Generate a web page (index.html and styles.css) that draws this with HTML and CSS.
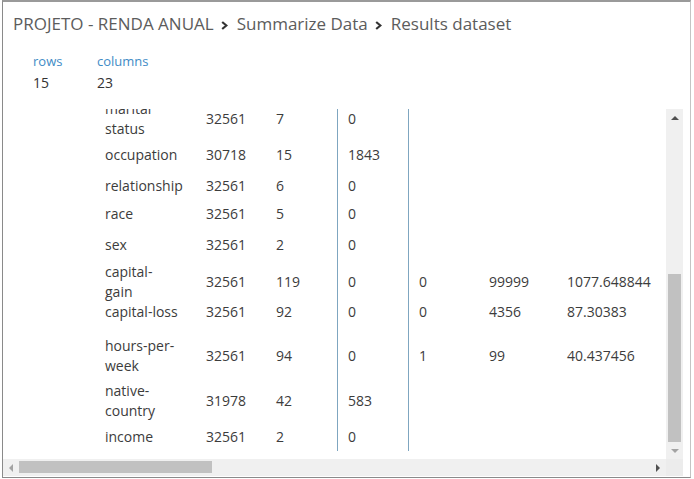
FILE: index.html
```
<!DOCTYPE html>
<html>
<head>
<meta charset="utf-8">
<link rel="stylesheet" href="styles.css">
</head>
<body>
<div class="panel">
  <div class="title">
    <span>PROJETO - RENDA ANUAL</span><svg class="chev" width="7" height="9" viewBox="0 0 7 9"><path d="M1.2 1 L5.4 4.5 L1.2 8" fill="none" stroke="#333" stroke-width="2.2"/></svg><span>Summarize Data</span><svg class="chev" width="7" height="9" viewBox="0 0 7 9"><path d="M1.2 1 L5.4 4.5 L1.2 8" fill="none" stroke="#333" stroke-width="2.2"/></svg><span>Results dataset</span>
  </div>
  <div class="stats">
    <div class="stat"><div class="label">rows</div><div class="value">15</div></div>
    <div class="stat"><div class="label">columns</div><div class="value">23</div></div>
  </div>
  <div class="viewport">
    <div class="content">
      <div class="table">
        <div class="row h37"><div class="c"></div><div class="c">marital<br>status</div><div class="c">32561</div><div class="c">7</div><div class="c sep">0</div><div class="c sep"></div><div class="c"></div><div class="c"></div></div>
        <div class="row h35"><div class="c"></div><div class="c">occupation</div><div class="c">30718</div><div class="c">15</div><div class="c sep">1843</div><div class="c sep"></div><div class="c"></div><div class="c"></div></div>
        <div class="row h27"><div class="c"></div><div class="c">relationship</div><div class="c">32561</div><div class="c">6</div><div class="c sep">0</div><div class="c sep"></div><div class="c"></div><div class="c"></div></div>
        <div class="row h30"><div class="c"></div><div class="c">race</div><div class="c">32561</div><div class="c">5</div><div class="c sep">0</div><div class="c sep"></div><div class="c"></div><div class="c"></div></div>
        <div class="row h32"><div class="c"></div><div class="c">sex</div><div class="c">32561</div><div class="c">2</div><div class="c sep">0</div><div class="c sep"></div><div class="c"></div><div class="c"></div></div>
        <div class="row h42"><div class="c"></div><div class="c">capital-<br>gain</div><div class="c">32561</div><div class="c">119</div><div class="c sep">0</div><div class="c sep">0</div><div class="c">99999</div><div class="c">1077.648844</div></div>
        <div class="row h18"><div class="c"></div><div class="c">capital-loss</div><div class="c">32561</div><div class="c">92</div><div class="c sep">0</div><div class="c sep">0</div><div class="c">4356</div><div class="c">87.30383</div></div>
        <div class="row h70"><div class="c"></div><div class="c">hours-per-<br>week</div><div class="c">32561</div><div class="c">94</div><div class="c sep">0</div><div class="c sep">1</div><div class="c">99</div><div class="c">40.437456</div></div>
        <div class="row h20"><div class="c"></div><div class="c">native-<br>country</div><div class="c">31978</div><div class="c">42</div><div class="c sep">583</div><div class="c sep"></div><div class="c"></div><div class="c"></div></div>
        <div class="row h40 last"><div class="c"></div><div class="c">income</div><div class="c">32561</div><div class="c">2</div><div class="c sep">0</div><div class="c sep"></div><div class="c"></div><div class="c"></div></div>
      </div>
    </div>
    <div class="vscroll">
      <div class="arrow up"></div>
      <div class="vtrack"><div class="vthumb"></div></div>
      <div class="arrow down"></div>
    </div>
    <div class="hscroll">
      <div class="harrow left"></div>
      <div class="htrack"><div class="hthumb"></div></div>
      <div class="harrow right"></div>
    </div>
    <div class="corner"></div>
  </div>
</div>
</body>
</html>
```
FILE: styles.css
```
* { box-sizing: border-box; }
html, body { margin: 0; padding: 0; background: #fff; }
body { font-family: "Open Sans", "Noto Sans", sans-serif; }

.panel {
  margin-left: 2px;
  width: 689px;
  height: 478px;
  border-left: 1px solid #8a8a8a;
  border-top: 2px solid #9a9a9a;
  border-right: 1px solid #c4c4c4;
  border-bottom: 1px solid #8a8a8a;
  background: #fff;
}

.title {
  padding: 10px 0 0 10px;
  font-size: 17px;
  line-height: 24px;
  color: #5c5c5c;
  white-space: nowrap;
}
.chev { margin: 0 9px 0 7px; vertical-align: 0; }

.stats {
  display: flex;
  margin-top: 16px;
  padding-left: 30px;
}
.stat { width: 64px; }
.label { font-size: 13px; line-height: 18px; color: #3f8cc6; }
.value { margin-top: 3px; font-size: 14px; line-height: 20px; color: #333; }

.viewport {
  margin-top: 16px;
  width: 680px;
  display: grid;
  grid-template-columns: 663px 17px;
  grid-template-rows: 350px 17px;
}
.content { overflow: hidden; }
.table { margin-top: -9px; }
.row {
  display: grid;
  grid-template-columns: 91px 101px 70px 72px 71px 70px 78px 130px;
  grid-template-rows: minmax(0, 1fr);
  font-size: 14px;
  line-height: 20px;
  color: #3c3c3c;
}
.c {
  display: flex;
  align-items: center;
  min-height: 0;
  padding-left: 11px;
  white-space: nowrap;
}
.c.sep { border-left: 1px solid #7fa6c0; padding-left: 10px; }
.row.last .c { padding-top: 12px; }
.h18 { height: 18px; }
.h20 { height: 20px; }
.h27 { height: 27px; }
.h30 { height: 30px; }
.h32 { height: 32px; }
.h35 { height: 35px; }
.h37 { height: 37px; }
.h40 { height: 40px; }
.h42 { height: 42px; }
.h70 { height: 70px; }

.vscroll {
  background: #f0f0f0;
  display: flex;
  flex-direction: column;
}
.arrow { height: 17px; display: flex; align-items: center; justify-content: center; }
.arrow.up::before {
  content: ""; border-left: 4px solid transparent; border-right: 4px solid transparent;
  border-bottom: 4px solid #505050;
}
.arrow.down::before {
  content: ""; border-left: 4px solid transparent; border-right: 4px solid transparent;
  border-top: 4px solid #a3a3a3;
}
.vtrack { flex: 1; display: flex; flex-direction: column; justify-content: flex-end; padding: 0 2px 0 2px; }
.vthumb { height: 168px; background: #c1c1c1; }

.hscroll {
  background: #f0f0f0;
  display: flex;
}
.harrow { width: 16px; display: flex; align-items: center; justify-content: center; }
.harrow.left::before {
  content: ""; border-top: 4px solid transparent; border-bottom: 4px solid transparent;
  border-right: 4px solid #a3a3a3;
}
.harrow.right::before {
  content: ""; border-top: 4px solid transparent; border-bottom: 4px solid transparent;
  border-left: 4px solid #505050;
}
.htrack { flex: 1; padding: 2px 0 3px 0; }
.hthumb { width: 193px; height: 12px; background: #c1c1c1; }
.corner { background: #ececec; }
```
